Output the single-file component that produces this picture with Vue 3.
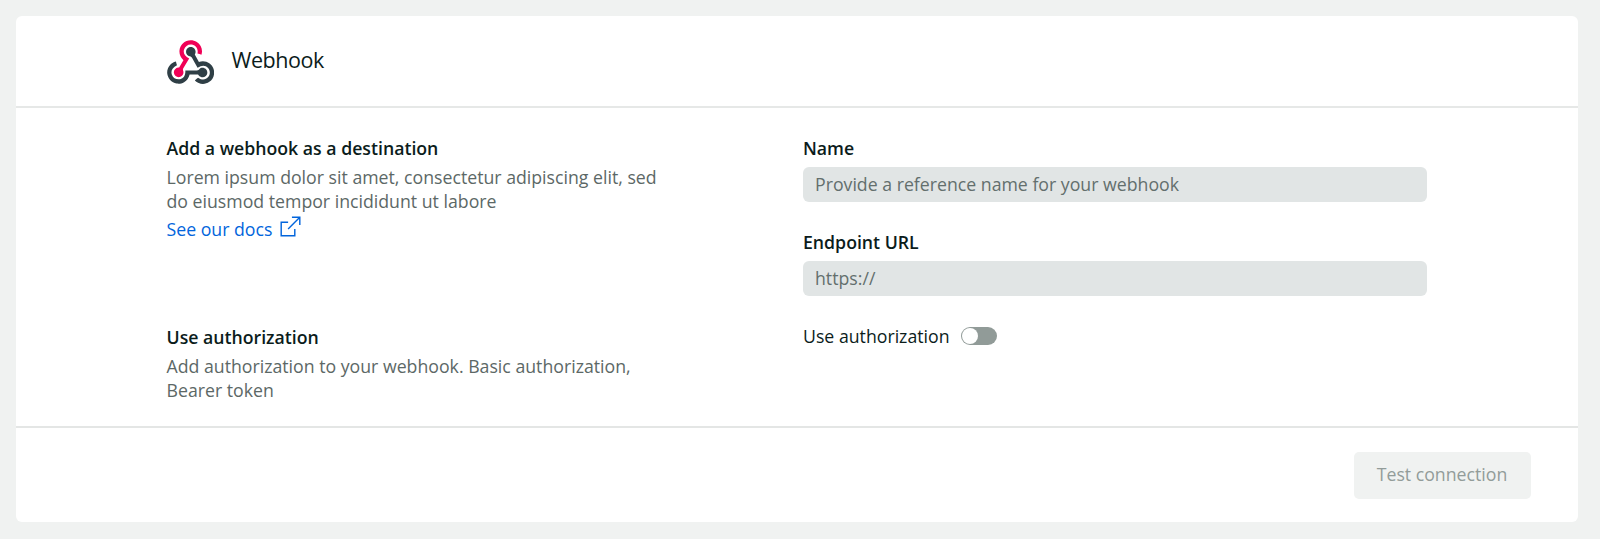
<script setup>
import { ref } from 'vue'

const name = ref('')
const endpoint = ref('')
const useAuthorization = ref(false)
</script>

<template>
  <main class="card">
    <header class="card-header">
      <svg class="logo" viewBox="0 0 256 239" aria-hidden="true">
        <path fill="#f00056" d="M119.54 100.503c-10.61 17.836-20.775 35.108-31.152 52.25-2.665 4.401-3.984 7.986-1.855 13.58 5.878 15.454-2.414 30.493-17.998 34.575-14.697 3.851-29.016-5.808-31.932-21.543-2.584-13.927 8.224-27.58 23.58-29.757 1.286-.184 2.6-.205 4.762-.367l23.358-39.168C73.612 95.465 64.868 78.39 66.803 57.23c1.368-14.957 7.25-27.883 18-38.477 20.59-20.288 52.002-23.573 76.246-8.001 23.284 14.958 33.948 44.094 24.858 69.031-6.854-1.858-13.756-3.732-21.343-5.79 2.854-13.865.743-26.315-8.608-36.981-6.178-7.042-14.106-10.733-23.12-12.093-18.072-2.73-35.815 8.88-41.08 26.618-5.976 20.13 3.069 36.575 27.784 48.967z" />
        <path fill="#2f3f46" d="M149.841 79.41c7.475 13.187 15.065 26.573 22.587 39.836 38.02-11.763 66.686 9.284 76.97 31.817 12.422 27.219 3.93 59.457-20.465 76.25-25.04 17.238-56.707 14.293-78.892-7.851 5.654-4.733 11.336-9.487 17.407-14.566 21.912 14.192 41.077 13.524 55.305-3.282 12.133-14.337 11.87-35.714-.615-49.75-14.408-16.197-33.707-16.691-57.035-1.143-9.677-17.168-19.522-34.199-28.893-51.491-3.16-5.828-6.648-9.21-13.77-10.443-11.893-2.062-19.571-12.275-20.032-23.717-.453-11.316 6.214-21.545 16.634-25.53 10.322-3.949 22.435-.762 29.378 8.014 5.674 7.17 7.477 15.24 4.491 24.083-.83 2.466-1.905 4.852-3.07 7.774z" />
        <path fill="#2f3f46" d="M167.707 187.21h-45.77c-4.387 18.044-13.863 32.612-30.19 41.876-12.693 7.2-26.373 9.641-40.933 7.29-26.808-4.323-48.728-28.456-50.658-55.63-2.184-30.784 18.975-58.147 47.178-64.293 1.947 7.071 3.915 14.21 5.862 21.264-25.876 13.202-34.832 29.836-27.59 50.636 6.375 18.304 24.484 28.337 44.147 24.457 20.08-3.962 30.204-20.65 28.968-47.432 19.036 0 38.088-.197 57.126.097 7.434.117 13.173-.654 18.773-7.208 9.22-10.784 26.191-9.811 36.121.374 10.148 10.409 9.662 27.157-1.077 37.127-10.361 9.62-26.73 9.106-36.424-1.26-1.992-2.136-3.562-4.673-5.533-7.298z" />
      </svg>
      <h1 class="title">Webhook</h1>
    </header>

    <section class="card-body">
      <div class="info">
        <h2 class="heading">Add a webhook as a destination</h2>
        <p class="text">Lorem ipsum dolor sit amet, consectetur adipiscing elit, sed<br />do eiusmod tempor incididunt ut labore</p>
        <a class="link" href="#">
          <span>See our docs</span>
          <svg class="link-icon" viewBox="0 0 22 22" aria-hidden="true">
            <path d="M8.5 6.5H1.25V20.75H15.5V13.5M8.5 13.5L20.5 1.5M12.5 1.25H20.75V9.5" />
          </svg>
        </a>
      </div>

      <div class="fields">
        <div class="field">
          <label class="heading" for="name">Name</label>
          <input id="name" v-model="name" class="input" type="text" placeholder="Provide a reference name for your webhook" />
        </div>
        <div class="field">
          <label class="heading" for="endpoint">Endpoint URL</label>
          <input id="endpoint" v-model="endpoint" class="input" type="text" placeholder="https://" />
        </div>
      </div>

      <div class="info">
        <h2 class="heading">Use authorization</h2>
        <p class="text">Add authorization to your webhook. Basic authorization,<br />Bearer token</p>
      </div>

      <div class="toggle-row">
        <span>Use authorization</span>
        <button
          class="toggle"
          :class="{ on: useAuthorization }"
          type="button"
          role="switch"
          aria-label="Use authorization"
          :aria-checked="useAuthorization"
          @click="useAuthorization = !useAuthorization"
        >
          <span class="knob"></span>
        </button>
      </div>
    </section>

    <footer class="card-footer">
      <button class="test-button" type="button" disabled>Test connection</button>
    </footer>
  </main>
</template>

<style>
body {
  background: #f0f2f1;
}
</style>

<style scoped>
.card {
  box-sizing: border-box;
  width: 1562px;
  height: 506px;
  margin: 16px;
  display: flex;
  flex-direction: column;
  background: #fff;
  border-radius: 6px;
  color: #0b1c1b;
  font: 18px/24px "Open Sans", "Noto Sans", sans-serif;
}
.card-header {
  box-sizing: border-box;
  height: 92px;
  flex: none;
  display: flex;
  align-items: center;
  gap: 17.5px;
  padding: 0 0 0 150.5px;
  border-bottom: 2px solid #e6e8e7;
}
.logo {
  width: 47.5px;
  height: 44px;
  margin-top: 1px;
  flex: none;
}
.title {
  margin: 0;
  padding-bottom: 2px;
  font-size: 21.5px;
  line-height: 28px;
  font-weight: 400;
  letter-spacing: -0.45px;
}
.card-body {
  box-sizing: border-box;
  height: 320px;
  flex: none;
  display: grid;
  grid-template-columns: 636.5px 624px;
  grid-template-rows: 189px auto;
  padding: 28px 0 0 150.5px;
  border-bottom: 2px solid #e4e6e5;
}
.heading {
  display: block;
  margin: 0;
  font-size: 17.7px;
  line-height: 24px;
  font-weight: 600;
}
.text {
  margin: 5px 0 0;
  font-size: 17.72px;
  line-height: 24px;
  color: #5c6866;
}
.link {
  display: flex;
  gap: 8px;
  margin-top: 4px;
  font-size: 17.7px;
  line-height: 25px;
  color: #0265dc;
  text-decoration: none;
}
.link-icon {
  width: 21px;
  height: 21px;
  margin-top: -1.5px;
  fill: none;
  stroke: currentColor;
  stroke-width: 1.5;
}
.fields {
  display: flex;
  flex-direction: column;
  gap: 28px;
}
.field {
  display: flex;
  flex-direction: column;
  gap: 7px;
}
.input {
  box-sizing: border-box;
  width: 624px;
  height: 35px;
  padding: 0 12px 2px;
  border: 0;
  border-radius: 6px;
  background: #e1e5e5;
  font: inherit;
  font-size: 17.7px;
  color: #0b1c1b;
}
.input::placeholder {
  color: #636f6d;
  opacity: 1;
}
.toggle-row {
  display: flex;
  align-items: center;
  gap: 11px;
  height: 22px;
  font-size: 17.7px;
}
.toggle {
  width: 36px;
  height: 18px;
  padding: 1px;
  border: 0;
  border-radius: 9px;
  background: #919b98;
  display: flex;
}
.toggle.on {
  justify-content: flex-end;
  background: #0265dc;
}
.knob {
  width: 16px;
  height: 16px;
  border-radius: 50%;
  background: #fff;
}
.card-footer {
  flex: 1;
  display: flex;
  justify-content: flex-end;
  align-items: center;
  padding-right: 47.5px;
}
.test-button {
  width: 177px;
  height: 47px;
  padding: 0 0 2px;
  border: 0;
  border-radius: 5px;
  background: #f0f2f1;
  color: #929c99;
  font: inherit;
  font-size: 17.7px;
}
</style>
